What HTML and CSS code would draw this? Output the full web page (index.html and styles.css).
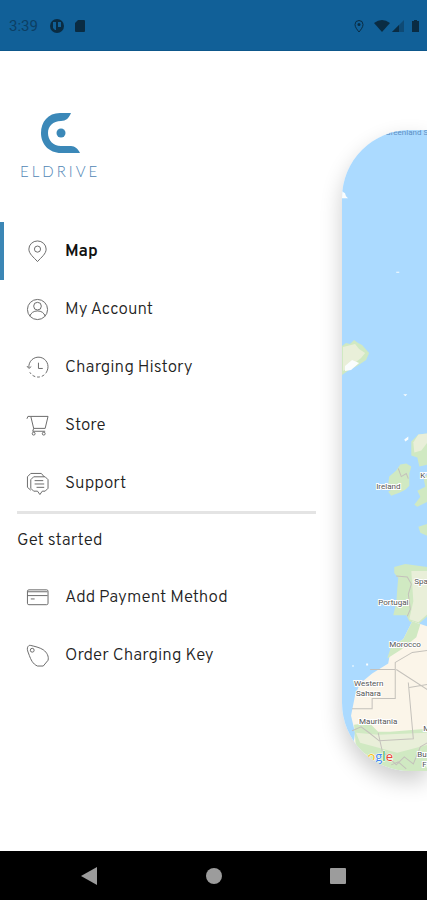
FILE: index.html
```html
<!DOCTYPE html>
<html lang="en">
<head>
<meta charset="utf-8">
<meta name="viewport" content="width=device-width, initial-scale=1">
<title>Eldrive</title>
<link rel="stylesheet" href="styles.css">
</head>
<body>
<header class="status">
  <span class="clock">3:39</span>
  <svg class="status-icon" width="16" height="16" viewBox="0 0 16 16"><circle cx="8" cy="8" r="7"/><path class="cut" d="M4 4h3v8H6L4 10zM9 4h3v5H9z"/></svg>
  <svg class="status-icon card" width="12" height="14" viewBox="0 0 12 14"><path d="M4 1h6a1 1 0 0 1 1 1v10a1 1 0 0 1-1 1H2a1 1 0 0 1-1-1V4z"/></svg>
  <svg class="status-icon pin" width="12" height="14" viewBox="0 0 12 14"><path class="line" d="M6 13C4 10.500 2 8 2 5.500a4 4 0 0 1 8 0C10 8 8 10.500 6 13z"/><circle cx="6" cy="5.500" r="1.500"/></svg>
  <svg class="status-icon" width="46" height="14" viewBox="0 0 46 14"><path d="M0 4Q8-2 16 4L8 13z"/><path class="faint" d="M30 1v12H18z"/><path d="M25 6v7h-7z"/><path d="M38 2h2V1h3v1h2v11h-7z"/></svg>
</header>

<main class="stage">
  <div class="drawer">
    <div class="brand">
      <svg class="mark" width="40" height="42" viewBox="0 0 40 42" aria-hidden="true"><path class="brand-fill" d="M31 1H20C8 1 1 10 1 21s8 20 20 20h19c-2-4-5-7-9-7H21c-8 0-13-6-13-13S13 9 21 9c5 0 8-3 10-8z"/><circle class="brand-fill" cx="21" cy="21" r="4.500"/></svg>
      <span class="wordmark">ELDRIVE</span>
    </div>
    <nav>
      <a class="item active" href="#map"><svg class="icon" viewBox="0 0 24 24"><path d="M12 22.500C8 18 3 14.500 3 9.500a9 8.500 0 0 1 18 0c0 5-5 8.500-9 13z"/><circle cx="12" cy="9.500" r="3.200"/></svg><span class="label">Map</span></a>
      <a class="item" href="#account"><svg class="icon" viewBox="0 0 24 24"><circle cx="12" cy="12" r="10.500"/><circle cx="12" cy="8.500" r="4"/><path d="M4 19c1-3.500 4-5.500 8-5.500s7 2 8 5.500"/></svg><span class="label">My Account</span></a>
      <a class="item" href="#history"><svg class="icon" viewBox="0 0 24 24"><path d="M3 12A10 10 0 1 1 22 15.500"/><path stroke-dasharray="3 2" d="M22 15.500A10 10 0 0 1 4 17"/><path d="M1 10.500l2 2.500 2.500-2M13 7v6h4.500"/></svg><span class="label">Charging History</span></a>
      <a class="item" href="#store"><svg class="icon" viewBox="0 0 24 24"><path d="M1 5l1-2.500h3L8 15h12l3-12.500H5M7 18h13M8 15l-1 3"/><circle cx="8" cy="20.500" r="1.500"/><circle cx="18.500" cy="20.500" r="1.500"/></svg><span class="label">Store</span></a>
      <a class="item" href="#support"><svg class="icon" viewBox="0 0 24 24"><path d="M5 19L1.500 16V5L5 1.500h11L19 5"/><path d="M8 5h12l3 3v9l-3 3h-3l-2.500 3.500L12 20H8l-3-3V8zM9 9h9M9 12.500h10M11 16h8"/></svg><span class="label">Support</span></a>
      <hr class="rule">
      <h2 class="heading">Get started</h2>
      <a class="item" href="#payment"><svg class="icon" viewBox="0 0 24 24"><rect x="1.500" y="4" width="21.500" height="15.500" rx="1.500"/><path d="M1.500 6h21M1.500 10h21M5 13.500h4"/></svg><span class="label">Add Payment Method</span></a>
      <a class="item" href="#key"><svg class="icon" viewBox="0 0 24 24"><path d="M5 1.500c4 1 9 2 13 4.500 4 3 6 7 5 11l-5 6h-6C7 21 5 16 3.500 12 2 8 1 6 1.500 4S3.500 1 5 1.500z"/><circle cx="6.500" cy="6.500" r="2"/></svg><span class="label">Order Charging Key</span></a>
    </nav>
  </div>

  <section class="map" aria-label="Map">
    <svg class="map-art" viewBox="0 0 85 638" preserveAspectRatio="xMinYMin slice">
      <rect class="sea" width="85" height="641"/>
      <path class="ice" d="M0 61l3 2 1 3 2 2H0z"/>
      <path class="ice" d="M54 141h3v1h-3zM61 263l4 0-2 2zM62 308l4-3 0 3-3 2z"/>
      <path class="green" d="M0 215l4-3 4 1 4-4 4 3 4 2 7 8-3 7-9 6-8 4-7 5z"/>
      <path class="pale" d="M1 216l12-3 4 5 6 4-4 5-9 7-9 6z"/>
      <path class="ice" d="M3 235l7-6 7 3-8 7-6 1z"/>
      <path class="green" d="M54 339l4-6 6-1 5 3-2 7v12l-4 4-6 3-8 3-3-4 6-4-6-3 1-8z"/>
      <path class="border" d="M56 337l3 8 5-3 2 5"/>
      <path class="green" d="M85 302l-9 1-7 7 0 14 6 2 2 9 8-2zM85 343l-4 3 2 9-8 4 3 6-6 8 3 2 10-5zM85 392l-9 3 2 6 7 3z"/>
      <path class="pale" d="M85 302l-9 1-5 8 1 10 7-2 6-8z"/>
      <path class="green" d="M52 435l11-3 22 3v49l-9 8-9-3-3-6H51l3-12 1-14 1-11-4-5z"/>
      <path class="pale" d="M69 439l16 0v43l-9 8-9-3 4-18z"/>
      <path class="border" d="M54 444l11 1 4 7-3 10 2 15-3 7"/>
      <path class="sand" d="M70 489l15 5v147H50L10 620l3-20-4-17 4-20 5-12 12-10 16-10 3-17 12-7z"/>
      <path class="green" d="M70 489l8 3-4 13-15 12-14 9 4-12 12-7z"/>
      <path class="green" d="M12 592l15-2 9 9 12 0 37-3v45H48L14 616z"/>
      <path class="pale" d="M14 600l22 2 49-2v12l-30 8-37-10z"/>
      <path class="ice" d="M10 533h2v1h-2zM24 531h2v2h-2z"/>
      <path class="border" d="M28 537h25v29H30v10H10M53 537v-7l17-10 15-2M54 537l31 20M66 550l5 56-34 2-10-8-8-6-9 4M67 555l18-3M36 600l4 18 14 14 8-8 9 7 7-17 7-4M49 632l7-3 8 7"/>
      <g class="place">
        <text x="43" y="5" class="water">Greenland Sea</text>
        <text x="34" y="357">Ireland</text>
        <text x="78" y="346">K</text>
        <text x="72" y="452">Spain</text>
        <text x="36" y="473">Portugal</text>
        <text x="47" y="515">Morocco</text>
        <text x="12" y="553">Western</text>
        <text x="14" y="563">Sahara</text>
        <text x="17" y="591">Mauritania</text>
        <text x="81" y="598">Mali</text>
        <text x="75" y="624">Burkina</text>
        <text x="80" y="634">Faso</text>
      </g>
      <text class="google" x="8" y="628"><tspan class="g-blue">G</tspan><tspan class="g-red">o</tspan><tspan class="g-yellow">o</tspan><tspan class="g-blue">g</tspan><tspan class="g-green">l</tspan><tspan class="g-red">e</tspan></text>
    </svg>
  </section>
</main>

<footer class="system">
  <button type="button" aria-label="Back"><svg width="18" height="18" viewBox="0 0 18 18"><path d="M17 0v18L1 9z"/></svg></button>
  <button type="button" aria-label="Home"><svg width="18" height="18" viewBox="0 0 18 18"><circle cx="9" cy="9" r="8"/></svg></button>
  <button type="button" aria-label="Recent apps"><svg width="18" height="18" viewBox="0 0 18 18"><rect x="1" y="1" width="16" height="16" rx="1"/></svg></button>
</footer>
</body>
</html>
```
FILE: styles.css
```css
* { box-sizing: border-box; }

body {
  margin: 0;
  min-height: 100vh;
  display: flex;
  flex-direction: column;
  background: #fff;
  color: #222;
  font-family: Overpass, "Noto Sans", sans-serif;
  font-size: 17px;
  font-weight: 300;
  overflow-x: hidden;
}

.status {
  display: flex;
  align-items: center;
  height: 51px;
  padding: 2px 7px 0 9px;
  background: #116098;
  border-bottom: 1px solid #0d578b;
}
.clock {
  margin-right: 11px;
  color: #0c3f64;
  font: 15px Roboto, sans-serif;
}
.status-icon { fill: #0a2c43; }
.status-icon .cut { fill: #116098; }
.status-icon .line { fill: none; stroke: #0a2c43; stroke-width: 1; }
.status-icon .faint { fill: #0e4a75; }
.card { margin-left: 9px; }
.pin { margin-left: auto; margin-right: 9px; }

.stage {
  flex: 1;
  display: flex;
  align-items: flex-start;
  overflow: hidden;
}
.drawer { flex: 1; padding-top: 61px; }

.brand {
  display: flex;
  flex-direction: column;
  height: 110px;
  padding-left: 20px;
}
.mark { margin-left: 20px; }
.brand-fill { fill: #3b88b8; }
.wordmark {
  margin-top: 7px;
  color: #4f86b5;
  font: 300 15px/20px Lato, sans-serif;
  letter-spacing: 3px;
}

.item {
  display: flex;
  align-items: center;
  gap: 16px;
  height: 58px;
  padding-left: 22px;
  border-left: 4px solid transparent;
  color: #222;
  text-decoration: none;
}
.item.active {
  border-left-color: #3b86b5;
  color: #111;
  font-weight: 600;
}
.label { padding-top: 2px; }
.icon {
  width: 23px;
  height: 23px;
  fill: none;
  stroke: #666;
  stroke-width: 1;
  stroke-linejoin: round;
}
.rule {
  height: 3px;
  margin: -1px 26px 0 17px;
  border: 0;
  background: #e4e4e4;
}
.heading {
  margin: 0;
  padding-left: 17px;
  font-size: 17px;
  font-weight: 300;
  line-height: 54px;
}

.map {
  flex: 0 0 20%;
  margin-top: 79px;
  margin-bottom: 77px;
  border-radius: 68px 0 0 68px;
  overflow: hidden;
  box-shadow: 0 10px 22px rgba(0, 0, 0, 0.2);
}
.map-art { display: block; width: 100%; }
.sea { fill: #abdaff; }
.green { fill: #d0e9c2; }
.pale { fill: #e9efd9; }
.sand { fill: #fbf5e9; }
.ice { fill: #fafdfd; }
.border { fill: none; stroke: #c4c1bb; stroke-width: 1; }
.place {
  fill: #555;
  stroke: #fff;
  stroke-width: 2;
  paint-order: stroke;
  font: 8px Roboto, sans-serif;
}
.water { fill: #5b8fc4; stroke: none; }
.google {
  font: 500 13px "Open Sans", sans-serif;
  stroke: #fff;
  stroke-width: 1;
  paint-order: stroke;
}
.g-blue { fill: #4285f4; }
.g-red { fill: #ea4335; }
.g-yellow { fill: #fbbc05; }
.g-green { fill: #34a853; }

.system {
  display: flex;
  align-items: center;
  justify-content: space-between;
  height: 49px;
  padding: 0 80px;
  background: #000;
}
.system button {
  display: flex;
  padding: 0;
  border: 0;
  background: none;
}
.system svg { fill: #9c9c9c; }
```
